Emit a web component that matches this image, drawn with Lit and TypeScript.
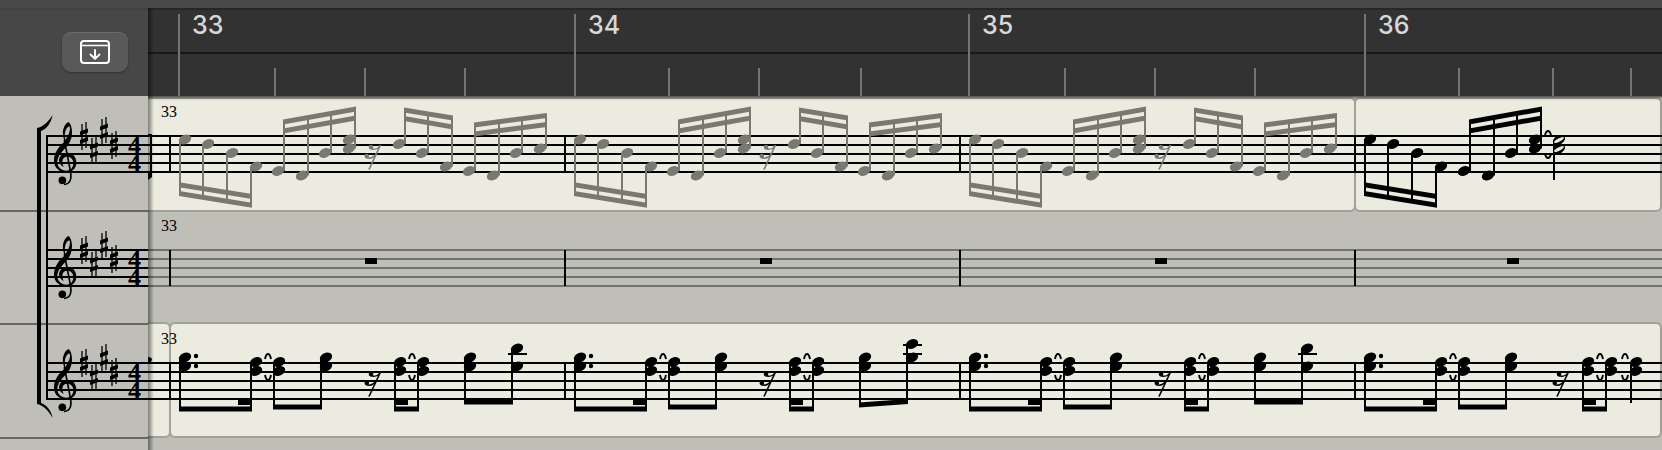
import { LitElement, html, svg, css } from "lit";
import { customElement } from "lit/decorators.js";

type Beam = [number, number, number, number];
interface Chord { x: number; steps: number[]; end: number; up?: boolean }

const MEASURE = 395;
const INK = "#000";
const GHOST = "#797972";

/* All score coordinates are relative to the top staff line and the left edge of the score. */
const stepY = (n: number) => n * 4.5 - 1;

const head = (x: number, n: number) => svg`
  <ellipse cx=${x} cy=${stepY(n)} rx="6.4" ry="4.6" transform="rotate(-22 ${x} ${stepY(n)})"/>`;

const chord = (c: Chord) => {
  const start = c.up ? stepY(Math.max(...c.steps)) : stepY(Math.min(...c.steps));
  return svg`
    <path d="M${c.x} ${start}V${c.end}" stroke="currentColor" stroke-width="2"/>
    ${c.steps.map((n) => head(c.x + (c.up ? -6 : 5), n))}`;
};

const beam = ([x1, y1, x2, y2]: Beam) => svg`
  <path d="M${x1 - 1} ${y1 - 2.5}L${x2 + 1} ${y2 - 2.5}V${y2 + 2.5}L${x1 - 1} ${y1 + 2.5}Z"/>`;

const eighthRest = (x: number) => svg`
  <g transform="translate(${x} 8)" fill="currentColor">
    <circle cx="6" cy="3" r="2.3"/><circle cx="1.8" cy="12" r="2.3"/>
    <path d="M15.5 1L4 25.5" stroke="currentColor" stroke-width="1.6" fill="none"/>
    <path d="M5 4.5Q12 7 15.5 1M1 13.5Q7 16 11.5 9.5" stroke="currentColor" stroke-width="1.4" fill="none"/>
  </g>`;

const tie = (x: number, y: number, dir: number) => svg`
  <path d="M${x - 3} ${y}Q${x - 2} ${y - 5 * dir} ${x} ${y - 5 * dir}Q${x + 2} ${y - 5 * dir} ${x + 3} ${y}"
    fill="none" stroke="currentColor" stroke-width="1.9"/>`;

const ties = (x: number) => svg`${tie(x, -4, 1)}${tie(x, 12, -1)}`;

const barline = (x: number) => svg`<path d="M${x} 0V36" stroke="#000" stroke-width="2"/>`;

const runDown: Chord[] = [
  { x: 32, steps: [1], end: 57 }, { x: 55, steps: [2], end: 61 },
  { x: 79, steps: [4], end: 65 }, { x: 103, steps: [7], end: 69 },
];
const runUp: Chord[] = [
  { x: 136, steps: [8], end: -14, up: true }, { x: 160, steps: [9], end: -18, up: true },
  { x: 183, steps: [4], end: -23, up: true }, { x: 207, steps: [1, 3], end: -28, up: true },
];
const runTail: Chord[] = [
  { x: 257, steps: [2], end: -27, up: true }, { x: 280, steps: [4], end: -23, up: true },
  { x: 304, steps: [7], end: -18, up: true },
  { x: 327, steps: [8], end: -11, up: true }, { x: 351, steps: [9], end: -14, up: true },
  { x: 374, steps: [4], end: -18, up: true }, { x: 398, steps: [3], end: -21, up: true },
];
const downBeams: Beam[] = [[32, 57.5, 103, 69.3], [32, 48.7, 103, 60.5]];
const upBeams: Beam[] = [[136, -14, 207, -27], [136, -5, 207, -18]];
const tailBeams: Beam[] = [
  [257, -26, 304, -18], [257, -17.5, 304, -9],
  [327, -11, 398, -20.5], [327, -2, 398, -11.5],
];

const melody = (i: number, full: boolean) => svg`
  <g transform="translate(${i * MEASURE})" color=${full ? GHOST : INK} fill="currentColor">
    ${runDown.map(chord)}${downBeams.map(beam)}
    <g transform="translate(${full ? 0 : 1})">${runUp.map(chord)}${upBeams.map(beam)}</g>
    ${full
      ? svg`${eighthRest(217)}${runTail.map(chord)}${tailBeams.map(beam)}`
      : svg`
        ${tie(215, -1, 0.8)}${tie(215, 18, -0.8)}
        <path d="M221 4V44" stroke="currentColor" stroke-width="2"/>
        ${[1, 3].map((n) => svg`<g transform="translate(226 ${stepY(n) + 0.5}) rotate(-28)">
          <ellipse rx="6.4" ry="4.4"/><ellipse rx="5.4" ry="1.7" fill="#ebebdf"/></g>`)}`}
  </g>`;

const flat = (x1: number, x2: number, y: number) => svg`
  <rect x=${x1 - 1} y=${y} width=${x2 - x1 + 2} height="5"/>`;

const comping = (i: number) => {
  const last = i === 3;
  const d = last ? 3 : 0;
  const high = i === 1;
  return svg`
  <g transform="translate(${i * MEASURE})" fill="currentColor">
    ${chord({ x: 32, steps: [-1, 1], end: 46 })}
    <circle cx="48" cy="-7" r="2.2"/><circle cx="48" cy="3" r="2.2"/>
    ${chord({ x: 103, steps: [0, 2], end: 46 })}
    ${flat(32, 103, 43.5)}${flat(91, 103, 37)}
    ${ties(120)}
    ${chord({ x: 126, steps: [0, 2], end: 44 })}
    ${chord({ x: 173, steps: [-1, 1], end: 44 })}
    ${flat(126, 173, 41.5)}
    ${eighthRest(217 + d)}
    ${chord({ x: 247 + d, steps: [0, 2], end: 46 })}
    ${ties(264 + d)}
    ${chord({ x: 270 + d, steps: [0, 2], end: 46 })}
    ${flat(247 + d, 270 + d, 43.5)}${flat(247 + d, 259 + d, 37)}
    ${last
      ? svg`${ties(292)}${chord({ x: 298, steps: [0, 2], end: 40 })}`
      : svg`
        ${chord({ x: 317, steps: [-1, 1], end: 40 })}
        ${chord({ x: 364, steps: high ? [-4, -1] : [-3, 1], end: 39 })}
        <path d="M360 -9h19${high ? "M360 -18h19" : ""}" stroke="currentColor" stroke-width="2"/>
        ${high ? beam([317, 42, 364, 38.5]) : flat(317, 364, 36.5)}`}
  </g>`;
};

const wholeRest = (x: number) => svg`<rect x=${x} y="8" width="12" height="6"/>`;

const staffLines = (color = INK) =>
  [0, 9, 18, 27, 36].map((y) => svg`<rect y=${y - 1} width="100%" height="2" fill=${color}/>`);

const sharp = (x: number, y: number) => svg`
  <g transform="translate(${x} ${y})">
    <path d="M-2 -12V14M2 -14V12" stroke="#000" stroke-width="1.3"/>
    <path d="M-4 -4.5L4 -7.5V-3.5L-4 -0.5ZM-4 4L4 1V5L-4 8Z"/>
  </g>`;

const clef = svg`
  <g transform="translate(0 -136) scale(.33333)">
    <path fill-rule="evenodd" d="M205 366C194 372 187 388 189 405L193 425C176 440 162 458 162 482C162 504 180 517 199 517C217 517 229 504 229 488C229 471 217 458 203 458C188 458 177 469 177 481C177 491 184 498 192 501C188 495 187 490 187 485C187 475 193 470 202 470C212 470 220 477 220 490C220 504 211 512 199 512C184 512 172 501 172 486C172 469 185 457 198 442C210 428 216 415 216 395C216 382 211 368 205 366ZM208 379C213 387 208 403 196 420C192 402 196 384 208 379Z"/>
    <path d="M193 420L211 512C216 538 210 553 192 553" fill="none" stroke="#000" stroke-width="5"/>
    <circle cx="187" cy="541" r="11.5"/>
  </g>`;

const majors = [31, 427, 821, 1217];
const minors = [127, 217, 317, 521, 611, 713, 917, 1007, 1107, 1311, 1405, 1483];

@customElement("score-head")
class ScoreHead extends LitElement {
  static styles = css`
    :host { display: block; height: 100%; }
    .head { display: block; width: 100%; height: 100%; overflow: visible; }
    .time { font: bold 26px "Liberation Serif", serif; }
  `;
  render() {
    return html`<svg class="head">
      <g transform="translate(0 38)">
        <svg x="46" y="-2" width="102" height="40">
          <g transform="translate(0 2)">${staffLines()}</g>
        </svg>
        ${clef}
        ${sharp(84, 0)}${sharp(94, 14)}${sharp(104, -5)}${sharp(114, 9)}
        <text class="time" y="18"><tspan x="128">4</tspan><tspan x="128" dy="18">4</tspan></text>
      </g>
    </svg>`;
  }
}

@customElement("app-root")
class AppRoot extends LitElement {
  static styles = css`
    :host { display: flex; flex-direction: column; min-height: 100vh; background: #bfbfb7; overflow: hidden; }
    * { box-sizing: border-box; }
    .topbar { height: 8px; background: #484848; }
    .header { display: flex; height: 88px; }
    .tools {
      width: 148px; flex: none; padding: 22px 20px 0 0; background: #474747;
      border-top: 2px solid #424242; display: flex; justify-content: flex-end; align-items: flex-start;
    }
    .catch {
      width: 66px; height: 40px; padding: 0; border: 0; border-radius: 9px; background: #595959; color: #fff;
      box-shadow: 0 1px 2px #2229, inset 0 1px #6b6b6b; display: grid; place-items: center;
    }
    .ruler { flex: 1; min-width: 0; background: #323232; border-top: 2px solid #262626; }
    .ticks { display: block; width: 100%; height: 100%; }
    .bar { font: 500 25px Inter, sans-serif; fill: #d8d8d8; }
    .body { display: flex; flex: 1; }
    .gutter { width: 148px; flex: none; position: relative; }
    .slot { height: 114px; border-bottom: 2px solid #666663; }
    .slot.first, .lane.first { padding-top: 2px; height: 116px; }
    .slot.short, .lane.short { height: 113px; }
    .bracket { position: absolute; left: 0; top: 0; width: 60px; height: 330px; }
    .score { flex: 1; min-width: 0; position: relative; }
    .lane { height: 114px; display: grid; grid-template: minmax(0, 1fr) / minmax(0, 1fr); }
    .lane > * { grid-area: 1 / 1; min-width: 0; min-height: 0; }
    .regions { display: flex; margin: -3px 0 1px; }
    .first .regions { margin: -1px 0 0; }
    .region { background: #ebebdf; border: 2px solid #a1a198; border-radius: 6px; margin-left: -2px; }
    .rest { flex: 1; }
    .open { border-left: 0; border-radius: 0 6px 6px 0; margin: 0; }
    .upto36 { width: 1208px; }
    .upto33 { width: 23px; }
    .notes { display: block; width: 100%; height: 100%; overflow: visible; }
    .num { font: 16px "Liberation Serif", serif; }
    .shade {
      position: absolute; inset: -88px auto 0 0; width: 6px; pointer-events: none;
      background: linear-gradient(90deg, #0007, #0000);
    }
    .drop {
      position: absolute; inset: 0 0 auto; height: 5px; pointer-events: none;
      background: linear-gradient(#0009, #0002 50%, #0000);
    }
  `;

  private notes(content: unknown, lineColor = INK) {
    return html`<svg class="notes" color="#000">
      <g transform="translate(0 38)">
        ${staffLines(lineColor)}
        ${[22, 417, 812, 1207].map(barline)}
        ${content}
        <text class="num" x="13" y="-19">33</text>
      </g>
    </svg>`;
  }

  render() {
    return html`
      <div class="topbar"></div>
      <header class="header">
        <div class="tools">
          <button class="catch" aria-label="Catch playhead">
            <svg width="30" height="24" fill="none" stroke="#fff" stroke-width="2" stroke-linecap="round" stroke-linejoin="round">
              <rect x="1" y="1" width="28" height="22" rx="3"/>
              <path d="M2 5.5H28" stroke-width="1.5"/>
              <path d="M15 10V18.5M10.500 14.5L15 18.8L19.5 14.5"/>
            </svg>
          </button>
        </div>
        <div class="ruler">
          <svg class="ticks">
            <rect y="42" width="100%" height="2" fill="#191919"/>
            ${majors.map((x, i) => svg`
              <rect x=${x - 1} y="4" width="2" height="82" fill="#747474"/>
              <text class="bar" x=${x + 13} y="24">${33 + i}</text>`)}
            ${minors.map((x) => svg`<rect x=${x - 1} y="58" width="2" height="28" fill="#747474"/>`)}
          </svg>
        </div>
      </header>
      <main class="body">
        <div class="gutter">
          <div class="slot first"><score-head></score-head></div>
          <div class="slot short"><score-head></score-head></div>
          <div class="slot"><score-head></score-head></div>
          <svg class="bracket">
            <path d="M37 32C43 31 49 25 52.5 19C51.5 26 47 33 41 35V307C47 309 51.5 315 52.5 322C49 315 43 309 37 308Z"/>
            <path d="M47 40V303" stroke="#000" stroke-width="2"/>
          </svg>
        </div>
        <div class="score">
          <div class="lane first">
            <div class="regions"><div class="region open upto36"></div><div class="region rest"></div></div>
            ${this.notes(svg`<path d="M0 -2H4V41L0 44V36H2V0H0Z"/>${[0, 1, 2, 3].map((i) => melody(i, i < 3))}`)}
          </div>
          <div class="lane short">
            ${this.notes(svg`${[217, 612, 1007, 1359].map(wholeRest)}`, "#73736d")}
          </div>
          <div class="lane">
            <div class="regions"><div class="region open upto33"></div><div class="region rest"></div></div>
            ${this.notes(svg`<path d="M0 -6Q4 -6 4 -3Q3 0 0 1Z"/>${[0, 1, 2, 3].map(comping)}`)}
          </div>
          <div class="drop"></div>
          <div class="shade"></div>
        </div>
      </main>`;
  }
}
